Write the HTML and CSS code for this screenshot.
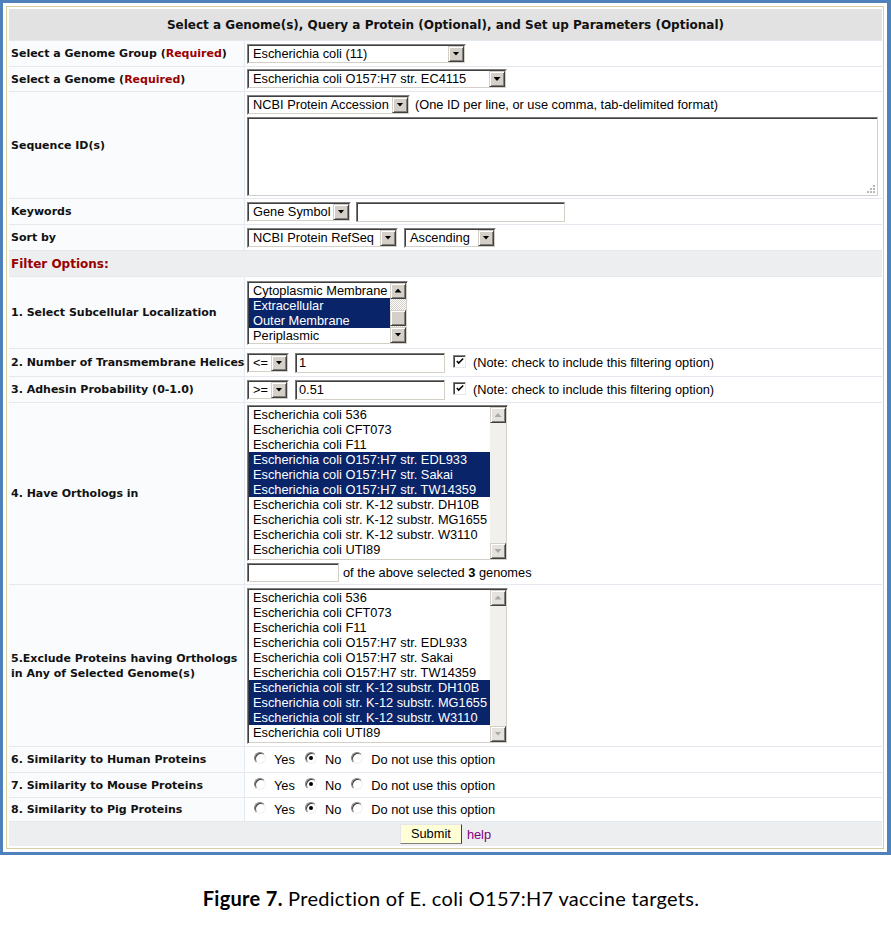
FILE: index.html
```html
<!DOCTYPE html>
<html>
<head>
<meta charset="utf-8">
<title>Select a Genome</title>
<link rel="stylesheet" href="styles.css">
</head>
<body>
<div class="frame">
<div class="inner">
<table class="form">
<colgroup><col class="c-lbl"><col class="c-val"></colgroup>
<tr class="h-hdr"><th colspan="2" class="hdr">Select a Genome(s), Query a Protein (Optional), and Set up Parameters (Optional)</th></tr>

<tr class="h26"><td class="lbl">Select a Genome Group (<span class="req">Required</span>)</td>
<td class="val"><div class="ctl"><span class="sel w-group"><span class="sel-in"><span class="sel-t">Escherichia coli (11)</span><span class="arr"></span></span></span></div></td></tr>

<tr class="h25"><td class="lbl">Select a Genome (<span class="req">Required</span>)</td>
<td class="val"><div class="ctl"><span class="sel w-genome"><span class="sel-in"><span class="sel-t">Escherichia coli O157:H7 str. EC4115</span><span class="arr"></span></span></span></div></td></tr>

<tr class="h107"><td class="lbl">Sequence ID(s)</td>
<td class="val">
<div class="ctl"><span class="sel w-acc"><span class="sel-in"><span class="sel-t">NCBI Protein Accession</span><span class="arr"></span></span></span><span class="hint">(One ID per line, or use comma, tab-delimited format)</span></div>
<div class="ta"><svg class="grip" width="11" height="11" viewBox="0 0 11 11"><rect x="8" y="2" width="2" height="2" fill="#b8b8b8"/><rect x="5" y="5" width="2" height="2" fill="#b8b8b8"/><rect x="8" y="5" width="2" height="2" fill="#b8b8b8"/><rect x="2" y="8" width="2" height="2" fill="#b8b8b8"/><rect x="5" y="8" width="2" height="2" fill="#b8b8b8"/><rect x="8" y="8" width="2" height="2" fill="#b8b8b8"/></svg></div>
</td></tr>

<tr class="h26"><td class="lbl">Keywords</td>
<td class="val"><div class="ctl"><span class="sel w-gene"><span class="sel-in"><span class="sel-t">Gene Symbol</span><span class="arr"></span></span></span><span class="txt w-kw"></span></div></td></tr>

<tr class="h26"><td class="lbl">Sort by</td>
<td class="val"><div class="ctl"><span class="sel w-sort"><span class="sel-in"><span class="sel-t">NCBI Protein RefSeq</span><span class="arr"></span></span></span><span class="sel w-asc"><span class="sel-in"><span class="sel-t">Ascending</span><span class="arr"></span></span></span></div></td></tr>

<tr class="h26"><td colspan="2" class="filter">Filter Options:</td></tr>

<tr class="h72"><td class="lbl">1. Select Subcellular Localization</td>
<td class="val"><div class="list list-loc">
<div class="opts">
<div class="opt">Cytoplasmic Membrane</div>
<div class="opt on">Extracellular</div>
<div class="opt on">Outer Membrane</div>
<div class="opt">Periplasmic</div>
</div>
<div class="sb"><span class="sbtn up"></span><span class="track"><span class="thumb"></span></span><span class="sbtn dn"></span></div>
</div></td></tr>

<tr class="h28"><td class="lbl">2. Number of Transmembrane Helices</td>
<td class="val"><div class="ctl"><span class="sel w-op"><span class="sel-in"><span class="sel-t">&lt;=</span><span class="arr"></span></span></span><span class="txt w-num">1</span><span class="chk"><svg width="11" height="11" viewBox="0 0 11 11"><path d="M2 5 L4 7.2 L9 2.2" fill="none" stroke="#000" stroke-width="1.7"/></svg></span><span class="note">(Note: check to include this filtering option)</span></div></td></tr>

<tr class="h26"><td class="lbl">3. Adhesin Probability (0-1.0)</td>
<td class="val"><div class="ctl"><span class="sel w-op"><span class="sel-in"><span class="sel-t">&gt;=</span><span class="arr"></span></span></span><span class="txt w-num">0.51</span><span class="chk"><svg width="11" height="11" viewBox="0 0 11 11"><path d="M2 5 L4 7.2 L9 2.2" fill="none" stroke="#000" stroke-width="1.7"/></svg></span><span class="note">(Note: check to include this filtering option)</span></div></td></tr>

<tr class="h182"><td class="lbl">4. Have Orthologs in</td>
<td class="val"><div class="list list-gen">
<div class="opts">
<div class="opt">Escherichia coli 536</div>
<div class="opt">Escherichia coli CFT073</div>
<div class="opt">Escherichia coli F11</div>
<div class="opt on">Escherichia coli O157:H7 str. EDL933</div>
<div class="opt on">Escherichia coli O157:H7 str. Sakai</div>
<div class="opt on">Escherichia coli O157:H7 str. TW14359</div>
<div class="opt">Escherichia coli str. K-12 substr. DH10B</div>
<div class="opt">Escherichia coli str. K-12 substr. MG1655</div>
<div class="opt">Escherichia coli str. K-12 substr. W3110</div>
<div class="opt">Escherichia coli UTI89</div>
</div>
<div class="sb off"><span class="sbtn up"></span><span class="track"></span><span class="sbtn dn"></span></div>
</div>
<div class="ctl cnt"><span class="txt w-cnt"></span><span class="cnt-t">of the above selected <b>3</b> genomes</span></div>
</td></tr>

<tr class="h162"><td class="lbl lbl2">5.Exclude Proteins having Orthologs<br>in Any of Selected Genome(s)</td>
<td class="val"><div class="list list-gen">
<div class="opts">
<div class="opt">Escherichia coli 536</div>
<div class="opt">Escherichia coli CFT073</div>
<div class="opt">Escherichia coli F11</div>
<div class="opt">Escherichia coli O157:H7 str. EDL933</div>
<div class="opt">Escherichia coli O157:H7 str. Sakai</div>
<div class="opt">Escherichia coli O157:H7 str. TW14359</div>
<div class="opt on">Escherichia coli str. K-12 substr. DH10B</div>
<div class="opt on">Escherichia coli str. K-12 substr. MG1655</div>
<div class="opt on">Escherichia coli str. K-12 substr. W3110</div>
<div class="opt">Escherichia coli UTI89</div>
</div>
<div class="sb off"><span class="sbtn up"></span><span class="track"></span><span class="sbtn dn"></span></div>
</div></td></tr>

<tr class="h26"><td class="lbl">6. Similarity to Human Proteins</td>
<td class="val"><div class="ctl radios"><span class="rad"></span><span class="rl">Yes</span><span class="rad on"></span><span class="rl">No</span><span class="rad"></span><span class="rl">Do not use this option</span></div></td></tr>

<tr class="h25"><td class="lbl">7. Similarity to Mouse Proteins</td>
<td class="val"><div class="ctl radios"><span class="rad"></span><span class="rl">Yes</span><span class="rad on"></span><span class="rl">No</span><span class="rad"></span><span class="rl">Do not use this option</span></div></td></tr>

<tr class="h24"><td class="lbl">8. Similarity to Pig Proteins</td>
<td class="val"><div class="ctl radios"><span class="rad"></span><span class="rl">Yes</span><span class="rad on"></span><span class="rl">No</span><span class="rad"></span><span class="rl">Do not use this option</span></div></td></tr>

<tr class="h24"><td colspan="2" class="submit-row"><div class="btns"><span class="btn">Submit</span><a class="help" href="#">help</a></div></td></tr>
</table>
</div>
</div>
<p class="caption"><b>Figure 7.</b> Prediction of E. coli O157:H7 vaccine targets.</p>
</body>
</html>
```

FILE: styles.css
```css
* { box-sizing: border-box; }
html, body { margin: 0; padding: 0; background: #fff; }
body {
  font-family: "Liberation Sans", Arial, sans-serif;
  font-size: 12.8px;
  color: #000;
  width: 891px;
}

.frame {
  width: 891px;
  height: 855px;
  border: 3px solid #4f81bd;
  border-right-width: 4px;
  padding: 3px;
}
.inner {
  height: 100%;
  border: 1px solid #d6cfa0;
  padding: 2px 1px 2px 2px;
}

.form {
  width: 873px;
  border-collapse: separate;
  border-spacing: 0;
  table-layout: fixed;
}
.c-lbl { width: 236px; }
.c-val { width: 637px; }

.form td, .form th { padding: 0; vertical-align: middle; }

.h-hdr > th { height: 32px; }
.h24 > td { height: 24px; }
.h25 > td { height: 25px; }
.h26 > td { height: 26px; }
.h28 > td { height: 28px; }
.h72 > td { height: 72px; }
.h107 > td { height: 107px; }
.h162 > td { height: 162px; }
.h182 > td { height: 182px; }

.hdr {
  background: #e2e2e2;
  font-family: "DejaVu Sans", Verdana, sans-serif;
  font-weight: bold;
  font-size: 12px;
  color: #111;
  text-align: center;
  border-bottom: 1px solid #e4e9ef;
}

.lbl {
  font-family: "DejaVu Sans", Verdana, sans-serif;
  font-weight: bold;
  font-size: 11px;
  color: #111;
  padding-left: 2px !important;
  background: #fafbfc;
  border-right: 1px solid #e4e9ef;
  border-bottom: 1px solid #e4e9ef;
  white-space: nowrap;
}
.lbl2 { line-height: 15px; }
.req { color: #990000; }

.val {
  padding: 0 2px !important;
  background: #fff;
  border-bottom: 1px solid #e4e9ef;
}

.filter {
  background: #eceef0;
  font-family: "DejaVu Sans", Verdana, sans-serif;
  font-weight: bold;
  font-size: 12px;
  color: #990000;
  padding-left: 2px !important;
  border-bottom: 1px solid #e4e9ef;
}

.ctl { display: flex; align-items: center; }

/* classic select */
.sel {
  display: inline-flex;
  flex: none;
  height: 20px;
  background: #fff;
  border: 1px solid;
  border-color: #808080 #ffffff #ffffff #808080;
}
.sel-in {
  display: flex;
  flex: 1;
  border: 1px solid;
  border-color: #404040 #d4d0c8 #d4d0c8 #404040;
}
.sel-t {
  flex: 1;
  padding-left: 4px;
  line-height: 16px;
  white-space: nowrap;
  overflow: hidden;
}
.arr {
  width: 16px;
  flex: none;
  background: #d4d0c8;
  border: 1px solid;
  border-color: #d4d0c8 #404040 #404040 #d4d0c8;
  box-shadow: inset 1px 1px 0 #fff, inset -1px -1px 0 #808080;
  display: flex;
  align-items: center;
  justify-content: center;
}
.arr::after {
  content: "";
  width: 7px;
  height: 4px;
  background: #000;
  clip-path: polygon(0 0, 100% 0, 50% 100%);
}

.w-group { width: 219px; }
.w-genome { width: 260px; }
.w-acc { width: 163px; }
.w-gene { width: 104px; }
.w-sort { width: 151px; }
.w-asc { width: 92px; margin-left: 6px; }
.w-op { width: 42px; }

/* text input */
.txt {
  display: inline-block;
  flex: none;
  height: 20px;
  background: #fff;
  border: 1px solid;
  border-color: #7a7a7a #d4d0c8 #d4d0c8 #7a7a7a;
  box-shadow: inset 1px 1px 0 #404040;
  padding: 0 3px;
  line-height: 18px;
}
.w-kw { width: 209px; margin-left: 5px; }
.w-num { width: 150px; margin-left: 6px; }
.w-cnt { width: 92px; height: 19px; }

.hint { margin-left: 5px; white-space: nowrap; }

.ta {
  position: relative;
  width: 631px;
  height: 79px;
  margin-top: 2px;
  background: #fff;
  border: 1px solid;
  border-color: #7a7a7a #d0d0d0 #d0d0d0 #7a7a7a;
  box-shadow: inset 1px 1px 0 #404040;
}
.grip { position: absolute; right: 1px; bottom: 1px; }

/* checkbox */
.chk {
  width: 13px;
  height: 13px;
  flex: none;
  margin-left: 8px;
  margin-bottom: 3px;
  background: #fff;
  border: 1px solid;
  border-color: #808080 #e8e8e8 #e8e8e8 #808080;
  box-shadow: inset 1px 1px 0 #404040;
  display: flex;
  align-items: center;
  justify-content: center;
}
.chk svg { display: block; margin: 1px 0 0 1px; }
.note { margin-left: 7px; white-space: nowrap; }

/* listbox */
.list {
  display: flex;
  background: #fff;
  border: 1px solid;
  border-color: #808080 #ffffff #ffffff #808080;
  box-shadow: inset 1px 1px 0 #404040, inset -1px -1px 0 #d4d0c8;
  padding: 1px;
}
.list-loc { width: 161px; height: 64px; }
.list-gen { width: 261px; height: 156px; }
.opts { flex: 1; overflow: hidden; }
.opt {
  height: 15px;
  line-height: 15px;
  padding-left: 4px;
  white-space: nowrap;
}
.opt.on { background: #0a246a; color: #fff; }

.sb { width: 16px; flex: none; display: flex; flex-direction: column; }
.sbtn {
  height: 16px;
  flex: none;
  background: #d4d0c8;
  border: 1px solid;
  border-color: #d4d0c8 #404040 #404040 #d4d0c8;
  box-shadow: inset 1px 1px 0 #fff, inset -1px -1px 0 #808080;
  display: flex;
  align-items: center;
  justify-content: center;
}
.sbtn::after {
  content: "";
  width: 7px;
  height: 4px;
  background: #000;
}
.sbtn.up::after { clip-path: polygon(50% 0, 100% 100%, 0 100%); }
.sbtn.dn::after { clip-path: polygon(0 0, 100% 0, 50% 100%); }
.sb.off .sbtn { background: #e4e2dc; }
.sb.off .sbtn::after { background: #a8a8a8; }
.track {
  flex: 1;
  background: repeating-conic-gradient(#d4d0c8 0 25%, #ffffff 0 50%) 0 0 / 2px 2px;
}
.sb.off .track {
  background: #f1f0ec;
}
.thumb {
  display: block;
  height: 16px;
  margin-top: 11px;
  background: #d4d0c8;
  border: 1px solid;
  border-color: #d4d0c8 #404040 #404040 #d4d0c8;
  box-shadow: inset 1px 1px 0 #fff, inset -1px -1px 0 #808080;
}

.cnt { margin-top: 2px; }
.cnt-t { margin-left: 4px; white-space: nowrap; }

/* radios */
.radios { padding-left: 7px; }
.rad {
  position: relative;
  width: 12px;
  height: 12px;
  flex: none;
  border-radius: 50%;
  background: #fff;
  border: 1px solid;
  border-color: #808080 #f0f0f0 #f0f0f0 #808080;
  box-shadow: inset 1px 1px 0 #404040;
  margin-bottom: 3px;
}
.rad.on::after {
  content: "";
  position: absolute;
  left: 3px;
  top: 3px;
  width: 4px;
  height: 4px;
  border-radius: 50%;
  background: #000;
}
.rl { margin-left: 8px; margin-right: 10px; white-space: nowrap; }

.submit-row {
  background: #eceef0;
}
.btns { display: flex; align-items: center; justify-content: center; }
.btn {
  width: 62px;
  height: 20px;
  line-height: 18px;
  text-align: center;
  background: #ffffd7;
  border: 1px solid;
  border-color: #e6e6e6 #404040 #808080 #e6e6e6;
}
.help {
  margin-left: 5px;
  color: #800080;
  text-decoration: none;
}

.caption {
  margin: 31px 0 0 0;
  padding-left: 11px;
  text-align: center;
  font-family: Lato, "Open Sans", sans-serif;
  font-size: 20px;
  letter-spacing: 0.3px;
  line-height: 24px;
  color: #000;
}
.caption b { font-weight: bold; }
```
